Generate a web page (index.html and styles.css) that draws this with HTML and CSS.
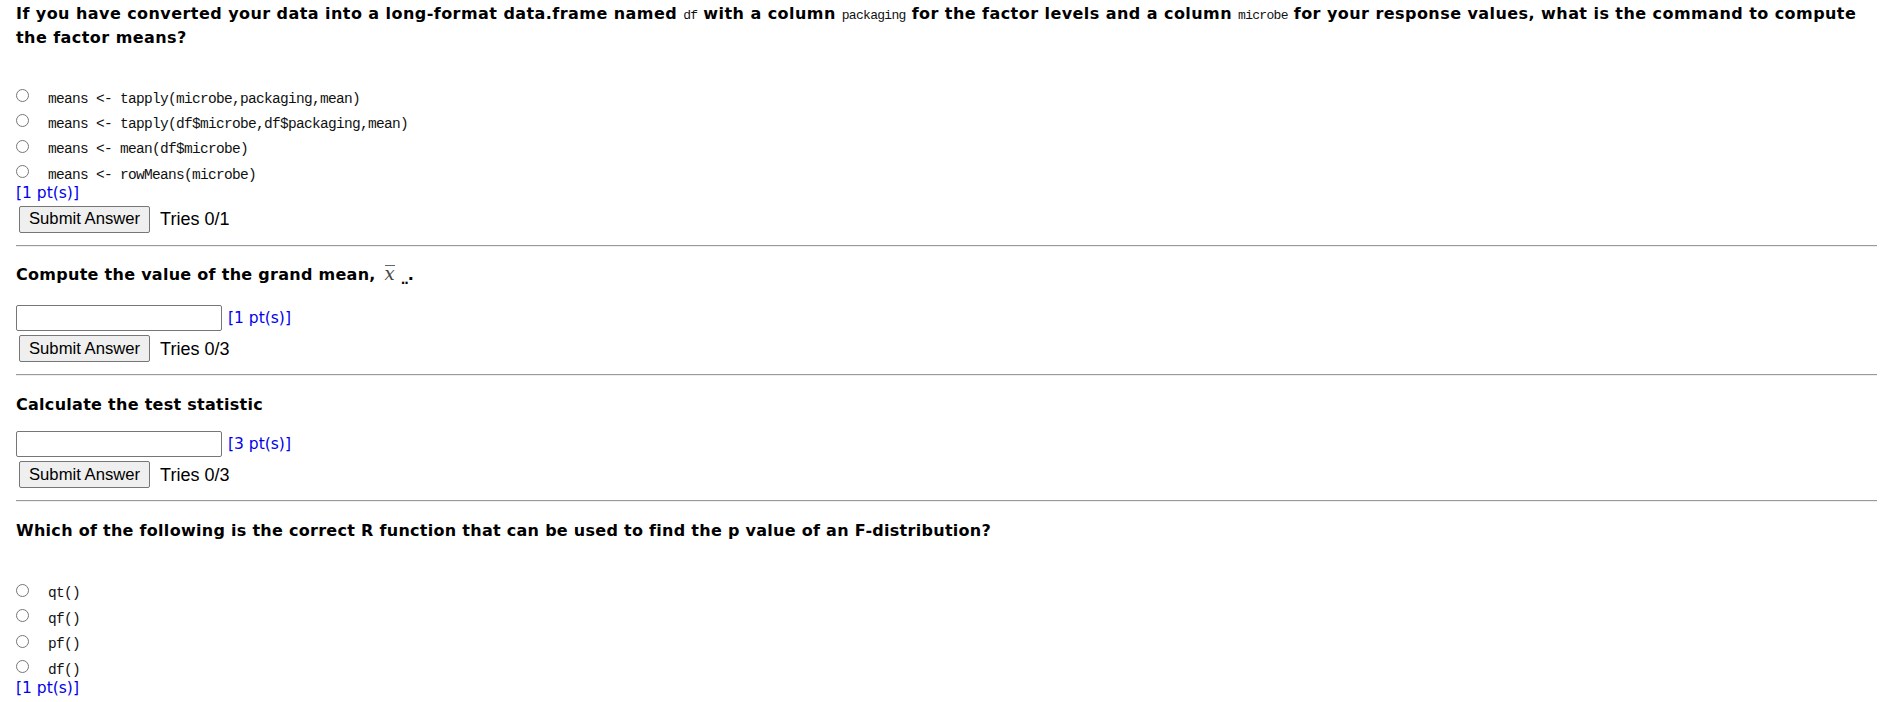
FILE: index.html
```html
<!DOCTYPE html>
<html>
<head>
<meta charset="utf-8">
<link rel="stylesheet" href="styles.css">
</head>
<body>
<div class="page">
  <section class="q q-first">
    <p class="q-title q-title-long">If you have converted your data into a long-format data.frame named <code class="ic">df</code> with a column <code class="ic">packaging</code> for the factor levels and a column <code class="ic">microbe</code> for your response values, what is the command to compute the factor means?</p>
    <div class="opts">
      <label class="opt"><input type="radio" name="q1"><span class="code">means &lt;- tapply(microbe,packaging,mean)</span></label>
      <label class="opt"><input type="radio" name="q1"><span class="code">means &lt;- tapply(df$microbe,df$packaging,mean)</span></label>
      <label class="opt"><input type="radio" name="q1"><span class="code">means &lt;- mean(df$microbe)</span></label>
      <label class="opt"><input type="radio" name="q1"><span class="code">means &lt;- rowMeans(microbe)</span></label>
    </div>
    <div class="pts">[1 pt(s)]</div>
    <div class="submit-row"><button class="btn">Submit Answer</button><span class="tries">Tries 0/1</span></div>
  </section>
  <hr class="sep">
  <section class="q">
    <p class="q-title q-title-math">Compute the value of the grand mean, <span class="math"><span class="mx">x</span><span class="msub">..</span></span>.</p>
    <div class="input-row"><input class="answer" type="text"><span class="pts pts-inline">[1 pt(s)]</span></div>
    <div class="submit-row submit-row-tight"><button class="btn">Submit Answer</button><span class="tries">Tries 0/3</span></div>
  </section>
  <hr class="sep">
  <section class="q">
    <p class="q-title q-title-short">Calculate the test statistic</p>
    <div class="input-row"><input class="answer" type="text"><span class="pts pts-inline">[3 pt(s)]</span></div>
    <div class="submit-row submit-row-tight"><button class="btn">Submit Answer</button><span class="tries">Tries 0/3</span></div>
  </section>
  <hr class="sep">
  <section class="q">
    <p class="q-title q-title-short">Which of the following is the correct R function that can be used to find the p value of an F-distribution?</p>
    <div class="opts opts-last">
      <label class="opt"><input type="radio" name="q4"><span class="code">qt()</span></label>
      <label class="opt"><input type="radio" name="q4"><span class="code">qf()</span></label>
      <label class="opt"><input type="radio" name="q4"><span class="code">pf()</span></label>
      <label class="opt"><input type="radio" name="q4"><span class="code">df()</span></label>
    </div>
    <div class="pts">[1 pt(s)]</div>
  </section>
</div>
</body>
</html>
```

FILE: styles.css
```css
html, body {
  margin: 0;
  padding: 0;
  background: #fff;
}

body {
  font-family: "DejaVu Sans", Verdana, sans-serif;
  color: #000;
}

.page {
  padding: 3px 7px 0 16px;
}

.q-title {
  margin: 0;
  font-size: 16px;
  line-height: 22px;
  font-weight: bold;
  letter-spacing: 0.28px;
}

.q-title-long {
  letter-spacing: 0.44px;
}

.ic {
  font-family: "Liberation Mono", monospace;
  font-size: 13px;
  font-weight: normal;
  letter-spacing: -0.7px;
  color: #111;
}

.opts {
  margin-top: 35px;
}

.opts-last {
  margin-top: 37px;
}

.opt {
  display: flex;
  align-items: flex-start;
  height: 25.4px;
}

.opt input {
  width: 13px;
  height: 13px;
  margin: 5px 0 0 0;
  flex: none;
}

.code {
  font-family: "Liberation Mono", monospace;
  font-size: 14.5px;
  letter-spacing: -0.7px;
  line-height: 16px;
  margin: 6.5px 0 0 19px;
  color: #111;
}

.pts {
  color: #0000ee;
  font-size: 15.5px;
  line-height: 18px;
}

.opts + .pts {
  margin-top: -2px;
}

.submit-row {
  display: flex;
  align-items: center;
  margin-top: 4px;
  padding-left: 3px;
}

.submit-row-tight {
  margin-top: 4.7px;
}

.btn {
  box-sizing: border-box;
  height: 27px;
  padding: 0 9px;
  font-family: "Liberation Sans", Arial, sans-serif;
  font-size: 16.66px;
  color: #000;
  background: #efefef;
  border: 1px solid #767676;
  border-radius: 2px;
  margin: 0;
}

.tries {
  font-family: "Liberation Sans", Arial, sans-serif;
  font-size: 18px;
  line-height: 20px;
  margin-left: 10px;
}

.sep {
  margin: 12px 0 0 0;
  height: 0;
  border: 0;
  border-top: 1px solid #9a9a9a;
  border-bottom: 1px solid #eeeeee;
}

.q-title-math,
.q-title-short {
  margin-top: 17.5px;
}

.q-title-math {
  margin-bottom: 18.5px;
}

.q-title-short {
  margin-bottom: 15px;
}

.math {
  display: inline-block;
  line-height: 0;
  font-weight: normal;
  margin-left: 3px;
  letter-spacing: 0;
}

.mx {
  display: inline-block;
  font-family: "DejaVu Serif", "Liberation Serif", serif;
  font-style: italic;
  font-size: 18px;
  line-height: 14px;
  color: #444;
  border-top: 1px solid #666;
  padding-top: 1px;
}

.msub {
  display: inline-block;
  font-family: "DejaVu Sans", sans-serif;
  font-weight: bold;
  font-size: 12px;
  line-height: 0;
  position: relative;
  top: 4px;
  margin-left: 6px;
  letter-spacing: -1px;
}

.input-row {
  display: flex;
  align-items: center;
}

.answer {
  box-sizing: border-box;
  width: 206px;
  height: 26px;
  margin: 0;
  border: 1px solid #767676;
  border-radius: 2px;
  background: #fff;
  padding: 1px 3px;
}

.pts-inline {
  margin-left: 6px;
}
```
